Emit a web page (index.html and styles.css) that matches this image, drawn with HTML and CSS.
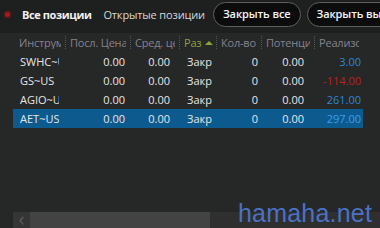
FILE: index.html
```html
<!DOCTYPE html>
<html lang="ru">
<head>
<meta charset="utf-8">
<link rel="stylesheet" href="styles.css">
</head>
<body>
<div class="app">
  <div class="topbar">
    <span class="dot"></span>
    <span class="tab active">Все позиции</span>
    <span class="tab">Открытые позиции</span>
    <button class="pill">Закрыть все</button>
    <button class="pill">Закрыть выбранные</button>
  </div>
  <div class="table">
    <div class="row head">
      <div class="c c1"><span class="t">Инструмент</span></div>
      <div class="c c2"><span class="t">Посл. Цена</span></div>
      <div class="c c3"><span class="t">Сред. цена</span></div>
      <div class="c c4 sorted"><span class="t lbl">Разм</span><span class="tri"></span></div>
      <div class="c c5"><span class="t">Кол-во</span></div>
      <div class="c c6"><span class="t">Потенциал</span></div>
      <div class="c c7"><span class="t">Реализованная</span></div>
    </div>
    <div class="row">
      <div class="c c1">SWHC~US</div><div class="c c2 n">0.00</div><div class="c c3 n">0.00</div><div class="c c4">Закрыта</div><div class="c c5 n">0</div><div class="c c6 n">0.00</div><div class="c c7 n pos">3.00</div>
    </div>
    <div class="row">
      <div class="c c1">GS~US</div><div class="c c2 n">0.00</div><div class="c c3 n">0.00</div><div class="c c4">Закрыта</div><div class="c c5 n">0</div><div class="c c6 n">0.00</div><div class="c c7 n neg">-114.00</div>
    </div>
    <div class="row">
      <div class="c c1">AGIO~US</div><div class="c c2 n">0.00</div><div class="c c3 n">0.00</div><div class="c c4">Закрыта</div><div class="c c5 n">0</div><div class="c c6 n">0.00</div><div class="c c7 n pos">261.00</div>
    </div>
    <div class="row sel">
      <div class="c c1">AET~US</div><div class="c c2 n">0.00</div><div class="c c3 n">0.00</div><div class="c c4">Закрыта</div><div class="c c5 n">0</div><div class="c c6 n">0.00</div><div class="c c7 n pos">297.00</div>
    </div>
  </div>
  <div class="scrollbar">
    <div class="sb-btn">&#x2039;</div>
    <div class="sb-thumb"></div>
    <div class="sb-track"></div>
  </div>
  <div class="watermark">hamaha.net</div>
</div>
</body>
</html>
```
FILE: styles.css
```css
* { box-sizing: border-box; }
html, body { margin: 0; padding: 0; }
body {
  background: #262727;
  font-family: "Open Sans", "Noto Sans", sans-serif;
  width: 380px;
  height: 228px;
  overflow: hidden;
}
.app {
  position: relative;
  height: 228px;
  display: flex;
  flex-direction: column;
}
.topbar {
  height: 33px;
  background: #1e1f1f;
  display: flex;
  align-items: center;
  padding-bottom: 5px;
  white-space: nowrap;
  overflow: hidden;
}
.dot {
  width: 5px;
  height: 5px;
  border-radius: 50%;
  background: #a31c1c;
  box-shadow: 0 0 3px 1px rgba(150, 20, 20, 0.6);
  margin-left: 5px;
  flex: none;
}
.tab {
  font-size: 11px;
  color: #d8d8d8;
  margin-left: 12px;
  letter-spacing: -0.15px;
  flex: none;
}
.tab.active {
  font-weight: 700;
  color: #f2f2f2;
  letter-spacing: -0.4px;
}
.pill {
  flex: none;
  font-family: inherit;
  font-size: 11px;
  font-weight: 600;
  color: #f4f4f4;
  background: #0c0c0c;
  border: 1px solid #5e5e5e;
  border-radius: 13px;
  height: 25px;
  padding: 0 9px;
  margin-left: 8px;
  line-height: 22px;
  letter-spacing: -0.1px;
}
.pill + .pill { margin-left: 6px; }
.table {
  margin-left: 13px;
  width: 350px;
  flex: 1;
}
.row {
  display: grid;
  grid-template-columns: 53px 65px 49px 37px 45px 53px 48px;
  height: 19px;
  align-items: center;
  font-size: 11px;
  color: #e6e6e6;
}
.row.head {
  color: #86838c;
  font-size: 11px;
  letter-spacing: -0.2px;
}
.c {
  white-space: nowrap;
  overflow: hidden;
  line-height: 19px;
}
.head .c {
  padding-left: 4px;
  height: 13px;
  line-height: 13px;
  display: flex;
  align-items: center;
}
.head .t {
  display: block;
  overflow: hidden;
  margin-right: 4px;
  flex: 0 1 auto;
  min-width: 0;
}
.head .c1 { padding-left: 6px; }
.head .c:not(.c7) {
  border-right: 1px dotted #55555a;
}
.sorted { color: #8aa53a; padding-left: 5px; }
.head .lbl {
  flex: 0 0 18px;
  width: 18px;
  margin-right: 0;
}
.tri {
  width: 0; height: 0;
  border-left: 4px solid transparent;
  border-right: 4px solid transparent;
  border-bottom: 4px solid #8aa53a;
  margin-left: 3px;
  flex: none;
}
.row:not(.head) .c1 { padding-left: 7px; margin-right: 7px; }
.row:not(.head) .c4 { padding-left: 7px; margin-right: 5px; }
.n { text-align: right; }
.row:not(.head) .c2 { padding-right: 6px; }
.row:not(.head) .c3 { padding-right: 10px; }
.row:not(.head) .c5 { padding-right: 4px; }
.row:not(.head) .c6 { padding-right: 11px; }
.row:not(.head) .c7 { padding-right: 2px; }
.pos { color: #2d86d6; }
.neg { color: #b8231f; }
.row.sel { background: #0d5a8e; }
.row.sel .pos { color: #3a9ef0; }
.scrollbar {
  height: 16px;
  margin-left: 13px;
  display: flex;
  background: #2f2f2f;
}
.sb-btn {
  width: 17px;
  background: #353535;
  color: #5c5c5c;
  font-size: 20px;
  line-height: 14px;
  text-align: center;
}
.sb-thumb {
  width: 180px;
  background: #434343;
}
.sb-track { flex: 1; }
.watermark {
  position: absolute;
  left: 238px;
  top: 199px;
  font-family: "Liberation Sans", Arial, sans-serif;
  font-size: 25px;
  color: #4a72c4;
  letter-spacing: 0.2px;
}
```
